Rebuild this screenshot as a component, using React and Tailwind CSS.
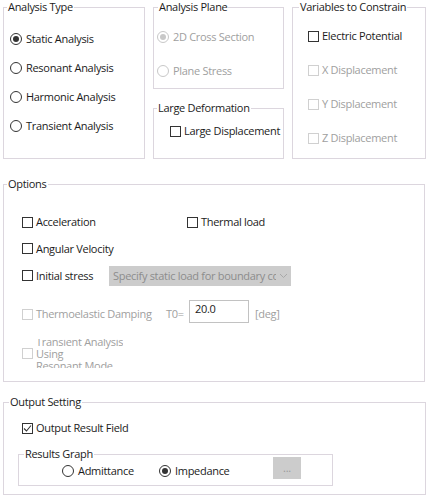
import React from 'react';

const Group = ({ title, className, legendClass, children }) => (
  <fieldset className={`border border-[#dcd6de] ${className}`}>
    <legend className={`px-[1px] leading-[14px] text-[#1b1b1b] ${legendClass}`}>{title}</legend>
    {children}
  </fieldset>
);

const Radio = ({ label, checked, disabled }) => (
  <div className="flex items-center">
    <span
      className={`w-[12px] h-[12px] rounded-full border flex items-center justify-center bg-white ${
        disabled ? 'border-[#c8c8c8]' : 'border-[#333333]'
      }`}
    >
      {checked && (
        <span className={`w-[6px] h-[6px] rounded-full ${disabled ? 'bg-[#c8c8c8]' : 'bg-[#333333]'}`} />
      )}
    </span>
    <span className={`ml-[4px] whitespace-nowrap ${disabled ? 'text-[#a0a0a0]' : 'text-[#1b1b1b]'}`}>{label}</span>
  </div>
);

const Check = ({ checked, disabled }) => (
  <span
    className={`w-[11px] h-[11px] shrink-0 border bg-white flex items-center justify-center ${
      disabled ? 'border-[#d0d0d0]' : 'border-[#333333]'
    }`}
  >
    {checked && (
      <svg width="9" height="9" viewBox="0 0 9 9">
        <polyline points="1,4.5 3.5,7 8,1.5" fill="none" stroke="#333" strokeWidth="1.1" />
      </svg>
    )}
  </span>
);

const CheckRow = ({ label, checked, disabled, className = '' }) => (
  <div className={`flex items-center ${className}`}>
    <Check checked={checked} disabled={disabled} />
    <span className={`ml-[3px] whitespace-nowrap ${disabled ? 'text-[#a0a0a0]' : 'text-[#1b1b1b]'}`}>{label}</span>
  </div>
);

export default function App() {
  return (
    <div className="w-[434px] h-[498px] bg-white pl-[3px] overflow-hidden font-['Open_Sans',sans-serif] text-[11px] tracking-[-0.3px] leading-[14px]">
      {/* top row */}
      <div className="flex">
        <Group title="Analysis Type" className="w-[142px] h-[159px]" legendClass="ml-[3px]">
          <div className="pt-[10px] pl-[6px]">
            <div className="h-[29px] flex items-center"><Radio label="Static Analysis" checked /></div>
            <div className="h-[29px] flex items-center"><Radio label="Resonant Analysis" /></div>
            <div className="h-[29px] flex items-center"><Radio label="Harmonic Analysis" /></div>
            <div className="h-[29px] flex items-center"><Radio label="Transient Analysis" /></div>
          </div>
        </Group>

        <div className="ml-[8px] w-[131px] flex flex-col">
          <Group title="Analysis Plane" className="h-[89px]" legendClass="ml-[4px]">
            <div className="pt-[6px] pl-[3px]">
              <div className="h-[34px] flex items-center"><Radio label="2D Cross Section" checked disabled /></div>
              <div className="h-[34px] flex items-center"><Radio label="Plane Stress" disabled /></div>
            </div>
          </Group>
          <Group title="Large Deformation" className="mt-[12px] h-[58px]" legendClass="ml-[3px]">
            <div className="pl-[16px] pt-[5px]">
              <CheckRow label="Large Displacement" className="h-[22px]" />
            </div>
          </Group>
        </div>

        <Group title="Variables to Constrain" className="ml-[8px] w-[134px] h-[159px]" legendClass="ml-[6px]">
          <div className="pt-[5px] pl-[15px]">
            <CheckRow label="Electric Potential" className="h-[34px]" />
            <CheckRow label="X Displacement" disabled className="h-[34px]" />
            <CheckRow label="Y Displacement" disabled className="h-[34px]" />
            <CheckRow label="Z Displacement" disabled className="h-[34px]" />
          </div>
        </Group>
      </div>

      {/* options */}
      <Group title="Options" className="mt-[18px] w-[422px] h-[205px]" legendClass="ml-[3px]">
        <div className="pl-[18px] pt-[18px]">
          <div className="h-[26px] flex items-center">
            <CheckRow label="Acceleration" className="w-[165px]" />
            <CheckRow label="Thermal load" />
          </div>
          <div className="h-[27px] flex items-center">
            <CheckRow label="Angular Velocity" />
          </div>
          <div className="h-[27px] flex items-center">
            <CheckRow label="Initial stress" className="w-[87px]" />
            <div className="w-[182px] h-[20px] bg-[#cccccc] flex items-center pl-[4px] pr-[3px] text-[#8c8c8c]">
              <span className="flex-1 overflow-hidden whitespace-nowrap">Specify static load for boundary condition</span>
              <svg width="9" height="6" viewBox="0 0 9 6" className="ml-[3px] shrink-0">
                <polyline points="1,1 4.5,4.5 8,1" fill="none" stroke="#a8a8a8" strokeWidth="1" />
              </svg>
            </div>
          </div>
          <div className="mt-[12px] h-[26px] flex items-center">
            <CheckRow label="Thermoelastic Damping" disabled className="w-[144px]" />
            <span className="text-[#a0a0a0] w-[23px]">T0=</span>
            <div className="w-[60px] h-[23px] border border-[#c2c2c2] bg-white pl-[5px] pt-[1px] text-[#1b1b1b] self-start -mt-[1px]">20.0</div>
            <span className="ml-[6px] text-[#a0a0a0]">[deg]</span>
          </div>
          <div className="mt-[12px] h-[29px] flex items-center">
            <Check disabled />
            <div className="ml-[3px] h-[29px] overflow-hidden text-[#a0a0a0] leading-[12px]">
              <div className="-mt-[3px]">
                <div>Transient Analysis</div>
                <div>Using</div>
                <div>Resonant Mode</div>
              </div>
            </div>
          </div>
        </div>
      </Group>

      {/* output */}
      <Group title="Output Setting" className="mt-[13px] w-[423px] h-[100px]" legendClass="ml-[5px]">
        <div className="pl-[18px] pt-[8px]">
          <CheckRow label="Output Result Field" checked className="h-[22px]" />
        </div>
        <Group title="Results Graph" className="mt-[8px] ml-[14px] w-[315px] h-[39px]" legendClass="ml-[5px]">
          <div className="flex items-center h-[20px] pl-[43px]">
            <div className="w-[97px]"><Radio label="Admittance" /></div>
            <div className="w-[114px]"><Radio label="Impedance" checked /></div>
            <div className="w-[28px] h-[22px] mb-[6px] bg-[#cccccc] flex items-center justify-center text-[#9a9a9a]">...</div>
          </div>
        </Group>
      </Group>
    </div>
  );
}
